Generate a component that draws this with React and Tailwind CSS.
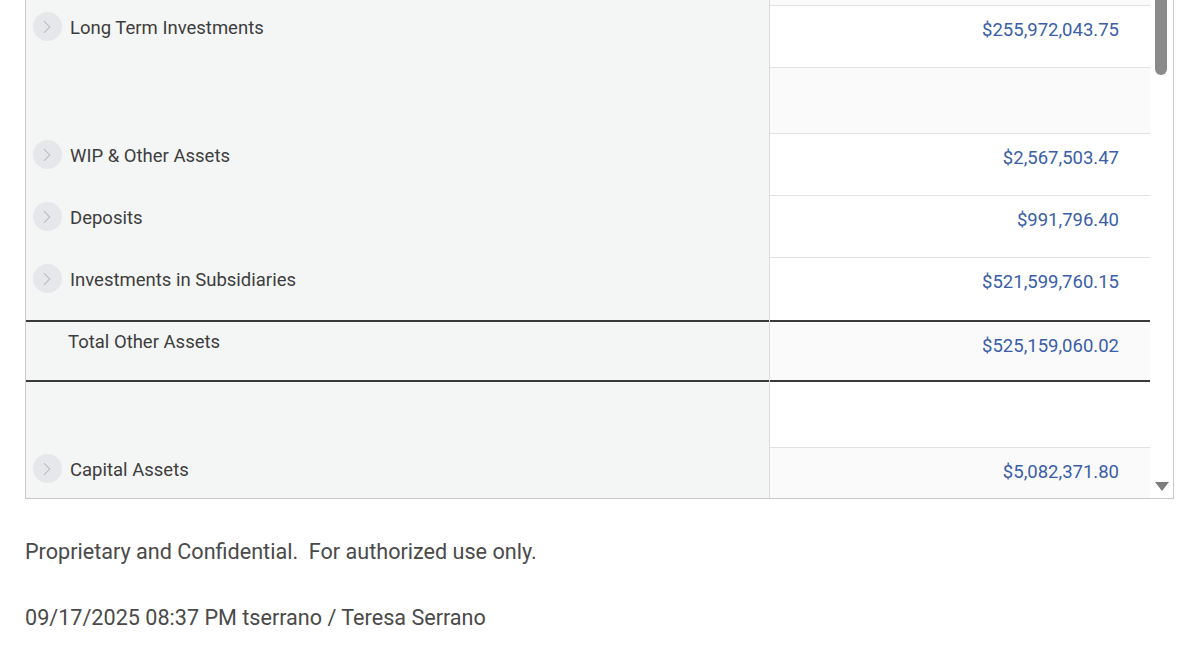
import { ChevronRight } from "lucide-react";

const rows = [
  { id: "prev", h: "h-[57px]", label: null, value: null, bgRight: "bg-[#fafafa]" },
  { id: "lti", h: "h-[62px]", label: "Long Term Investments", value: "$255,972,043.75", expand: true },
  { id: "e1", h: "h-[66px]", label: null, value: null, bgRight: "bg-[#fafafa]" },
  { id: "wip", h: "h-[62px]", label: "WIP & Other Assets", value: "$2,567,503.47", expand: true },
  { id: "dep", h: "h-[62px]", label: "Deposits", value: "$991,796.40", expand: true },
  { id: "inv", h: "h-[63px]", label: "Investments in Subsidiaries", value: "$521,599,760.15", expand: true },
  { id: "tot", h: "h-[60px]", label: "Total Other Assets", value: "$525,159,060.02", total: true, bgRight: "bg-[#fafafa]" },
  { id: "e2", h: "h-[67px]", label: null, value: null, total: true },
  { id: "cap", h: "h-[62px]", label: "Capital Assets", value: "$5,082,371.80", expand: true, bgRight: "bg-[#fafafa]" },
];

function Row({ row, first }) {
  const topBorder = first
    ? ""
    : row.total
    ? "border-t-2 border-[#3a3a3a]"
    : "border-t border-[#e2e2e2]";
  const leftBorder = row.total ? "border-t-2 border-[#3a3a3a]" : first ? "" : "border-t border-transparent";

  return (
    <div className="flex">
      <div className={`w-[743px] shrink-0 bg-[#f4f6f5] ${leftBorder} ${row.h}`}>
        {row.label && (
          <div className="flex items-center pt-[6px]">
            {row.expand ? (
              <span className="ml-[7px] mr-[8px] flex h-[29px] w-[29px] items-center justify-center rounded-full bg-[#e6e7ea] text-[#b0b1b5]">
                <ChevronRight className="-ml-[1px] h-[22px] w-[22px]" strokeWidth={1.1} />
              </span>
            ) : (
              <span className="w-[42px]" />
            )}
            <span className="pt-[2px] text-[18.5px] leading-[24px] text-[#3d3d3d]">{row.label}</span>
          </div>
        )}
      </div>
      <div className="w-px shrink-0 bg-[#dcdcdc]" />
      <div className={`flex-1 ${row.bgRight || "bg-white"} ${topBorder} ${row.h}`}>
        {row.value && (
          <div className="pr-[31px] pt-[12px] text-right text-[18.5px] leading-[24px] text-[#3a5ea8]">
            {row.value}
          </div>
        )}
      </div>
    </div>
  );
}

export default function App() {
  return (
    <div
      className="min-h-screen bg-white"
      style={{ fontFamily: "Roboto, 'Liberation Sans', sans-serif" }}
    >
      <div className="mx-[25px] flex h-[499px] w-[1149px] overflow-hidden border-x border-b border-[#c9c9c9]">
        <div className="flex-1 overflow-hidden">
          <div className="-mt-[52px]">
            {rows.map((r, i) => (
              <Row key={r.id} row={r} first={i === 0} />
            ))}
          </div>
        </div>
        <div className="flex w-[23px] shrink-0 flex-col items-center justify-between bg-white pb-[7px]">
          <div className="-ml-[1px] h-[75px] w-[12px] rounded-b-[6px] bg-[#8b8b8b]" />
          <svg width="14" height="9" viewBox="0 0 14 9">
            <polygon points="0,0 14,0 7,9" fill="#7d7d7d" />
          </svg>
        </div>
      </div>
      <div className="px-[25px] pt-[39px] text-[21.6px] leading-[28px] text-[#4a4a4a]">
        <p className="whitespace-pre">Proprietary and Confidential.  For authorized use only.</p>
        <p className="mt-[38px]">09/17/2025 08:37 PM tserrano / Teresa Serrano</p>
      </div>
    </div>
  );
}
